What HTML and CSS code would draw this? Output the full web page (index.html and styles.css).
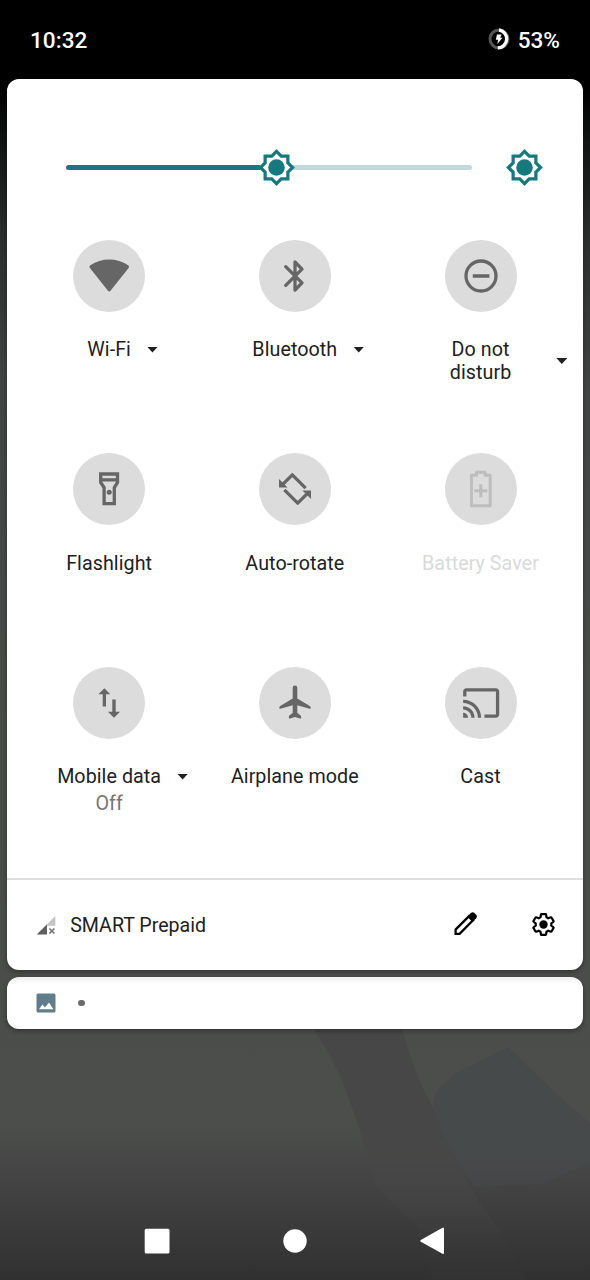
FILE: index.html
```
<!DOCTYPE html>
<html lang="en">
<head>
<meta charset="utf-8">
<title>Quick settings</title>
<link rel="stylesheet" href="styles.css">
</head>
<body>
<div class="screen">
  <svg class="wallpaper" viewBox="0 0 590 280">
    <path fill="#484747" d="M306 18Q338 64 347 94Q364 138 376 187L418 227Q422 255 433 280H527Q507 238 480 204Q460 168 448 145L433 108Q410 66 400 18Z"/>
    <path fill="#464a4b" d="M508 47L457 73Q431 90 433 110L448 145L474 187L542 184L590 163V123L561 98L542 80Z"/>
  </svg>

  <header class="status">
    <span class="clock">10:32</span>
    <span class="battery">
      <svg class="battery-ring" viewBox="0 0 22 24">
        <circle cx="11" cy="12" r="9" fill="none" stroke="#555" stroke-width="3"/>
        <path d="M11 3A9 9 0 0 1 9.8 20.9" fill="none" stroke="#fff" stroke-width="3.4"/>
        <path d="M9 7.5h4.6l-1.4 3.2h2.3L9.3 17l.8-4.2H7.8Z" fill="#fff"/>
      </svg>
      <span>53%</span>
    </span>
  </header>

  <main class="panel">
    <div class="brightness">
      <div class="slider">
        <span class="slider-on"></span>
        <svg class="sun" viewBox="0 0 24 24"><path class="sun-rays" d="M19 9.1V5h-4.1L12 2.1 9.1 5H5v4.1L2.1 12 5 14.9V19h4.1l2.9 2.9 2.9-2.9H19v-4.1l2.9-2.9Z"/><circle cx="12" cy="12" r="5.1"/></svg>
        <span class="slider-off"></span>
      </div>
      <svg class="sun" viewBox="0 0 24 24"><path class="sun-rays" d="M19 9.1V5h-4.1L12 2.1 9.1 5H5v4.1L2.1 12 5 14.9V19h4.1l2.9 2.9 2.9-2.9H19v-4.1l2.9-2.9Z"/><circle cx="12" cy="12" r="5.1"/></svg>
    </div>

    <div class="tiles">
      <div class="tile">
        <svg class="disc" viewBox="0 0 72 72"><path class="fill" d="M16.9 27.9Q15.6 26.4 17.3 25.2Q26 19.4 36.3 19.4T55.2 25.2Q56.8 26.4 55.6 27.9L37.5 50.8Q36.2 52 35 50.8Z"/></svg>
        <div class="label-row"><span class="label">Wi-Fi</span><i class="caret"></i></div>
      </div>
      <div class="tile">
        <svg class="disc" viewBox="0 0 72 72"><path class="line round" d="M26.7 26.7L43 42.8 36 50V22l7 7.2L26.7 45.3"/></svg>
        <div class="label-row"><span class="label">Bluetooth</span><i class="caret"></i></div>
      </div>
      <div class="tile">
        <svg class="disc" viewBox="0 0 72 72"><circle class="line" cx="36" cy="36" r="15"/><path class="line" d="M27.8 36h16.6"/></svg>
        <div class="label-row wide"><span class="label">Do not<br>disturb</span><i class="caret"></i></div>
      </div>
      <div class="tile">
        <svg class="disc" viewBox="0 0 72 72"><path class="line" d="M27.7 21H44.5V29.5L41.3 34.6V50.6H31.1V34.6L27.7 29.5ZM28 26.9H44"/><circle class="fill" cx="36.2" cy="39.2" r="2.5"/></svg>
        <div class="label-row"><span class="label">Flashlight</span></div>
      </div>
      <div class="tile">
        <svg class="disc" viewBox="0 0 72 72"><g id="turn"><path class="line" stroke-linejoin="round" d="M24 31.2L33.3 21.8 46.6 35.1"/><path class="fill" d="M20 26V34.4H28.6Z"/></g><use href="#turn" transform="rotate(180 36 36)"/></svg>
        <div class="label-row"><span class="label">Auto-rotate</span></div>
      </div>
      <div class="tile disabled">
        <svg class="disc" viewBox="0 0 72 72"><path class="line" stroke-linejoin="round" d="M31.5 22.2V19.2H40.2V22.2H45.2V52.7H26.4V22.2ZM35.8 31.2V44.2M29.3 37.7H42.3"/></svg>
        <div class="label-row"><span class="label">Battery Saver</span></div>
      </div>
      <div class="tile">
        <svg class="disc" viewBox="0 0 72 72"><path class="fill" d="M31.4 21.2L37.3 27.2H33V39.5H29.7V27.2H25.4ZM41 50.8L35 44.8H39.3V32.5H42.7V44.8H47Z"/></svg>
        <div class="label-row"><span class="label">Mobile data</span><i class="caret"></i></div>
        <span class="state">Off</span>
      </div>
      <div class="tile">
        <svg class="disc" viewBox="0 0 72 72"><path class="fill" d="M36 18.5A2.3 2.3 0 0 1 38.3 20.8V31.5L50.4 38.7Q51.8 39.6 51.8 41Q51.7 42 50.6 41.7L38.3 38.3V46L41.4 48.2Q42.2 49 42.2 50.7Q42.1 51.8 41 51.5L36 50.1 31 51.5Q29.9 51.8 29.8 50.7Q29.8 49 30.6 48.2L33.7 46V38.3L21.4 41.7Q20.3 42 20.2 41Q20.2 39.6 21.6 38.7L33.7 31.5V20.8A2.3 2.3 0 0 1 36 18.5Z"/></svg>
        <div class="label-row"><span class="label">Airplane mode</span></div>
      </div>
      <div class="tile">
        <svg class="disc" viewBox="0 0 72 72"><path class="fill" transform="translate(16.5 16.3) scale(1.64)" d="M21 3H3c-1.1 0-2 .9-2 2v3h2V5h18v14h-7v2h7c1.1 0 2-.9 2-2V5c0-1.1-.9-2-2-2zM1 18v3h3c0-1.66-1.34-3-3-3zm0-4v2c2.76 0 5 2.24 5 5h2c0-3.87-3.13-7-7-7zm0-4v2c4.97 0 9 4.03 9 9h2c0-6.08-4.93-11-11-11z"/></svg>
        <div class="label-row"><span class="label">Cast</span></div>
      </div>
    </div>

    <footer class="footer">
      <svg class="signal" viewBox="0 0 20 20"><path fill="#c4c4c4" d="M11 9.3L19.3 1V10.8H11Z"/><path fill="#5f5f5f" d="M11 9.3V19.6H.7Z"/><path d="M13.4 13.5l5 5M18.4 13.5l-5 5" stroke="#777" stroke-width="1.7"/></svg>
      <span class="carrier">SMART Prepaid</span>
      <svg class="edit" viewBox="0 0 24 24"><path d="M1.6 21.9V17.6L15 4.2 19 8.2 5.6 21.9Z" fill="none" stroke="#000" stroke-width="2.3"/><path d="M13.2 4.7L16.8 1.1Q18.7-.5 20.5 1.1L22.2 2.8Q23.7 4.6 22.2 6.3L18.5 10Z"/></svg>
      <svg class="gear" viewBox="0 0 24 24"><path fill="none" stroke="#000" stroke-width="2.1" d="M19.43 12.98c.04-.32.07-.64.07-.98 0-.34-.03-.66-.07-.98l2.11-1.65c.19-.15.24-.42.12-.64l-2-3.46c-.09-.16-.26-.25-.44-.25-.06 0-.12.01-.17.03l-2.49 1c-.52-.4-1.08-.73-1.69-.98l-.38-2.65C14.46 2.18 14.25 2 14 2h-4c-.25 0-.46.18-.49.42l-.38 2.65c-.61.25-1.17.59-1.69.98l-2.49-1c-.06-.02-.12-.03-.18-.03-.17 0-.34.09-.43.25l-2 3.46c-.13.22-.07.49.12.64l2.11 1.65c-.04.32-.07.65-.07.98 0 .33.03.66.07.98l-2.11 1.65c-.19.15-.24.42-.12.64l2 3.46c.09.16.26.25.44.25.06 0 .12-.01.17-.03l2.49-1c.52.4 1.08.73 1.69.98l.38 2.65c.03.24.24.42.49.42h4c.25 0 .46-.18.49-.42l.38-2.65c.61-.25 1.17-.59 1.69-.98l2.49 1c.06.02.12.03.18.03.17 0 .34-.09.43-.25l2-3.46c.12-.22.07-.49-.12-.64l-2.11-1.65z"/><circle cx="12" cy="12" r="4"/></svg>
    </footer>
  </main>

  <section class="notice">
    <svg class="picture" viewBox="0 0 20 20"><rect x=".5" y=".5" width="19" height="19" rx="1.5" fill="#607d8b"/><path fill="#fff" d="M3 16.2L6.5 11.5 9 14.4 13 9.5 17.4 16.2Z"/></svg>
    <span class="dot"></span>
  </section>

  <nav class="nav">
    <svg viewBox="0 0 28 28"><rect x="1.7" y="1.7" width="24.8" height="24.8" rx="1.5"/></svg>
    <svg viewBox="0 0 28 28"><circle cx="14" cy="14" r="11.7"/></svg>
    <svg viewBox="0 0 28 28"><path stroke="#fff" stroke-width="2" stroke-linejoin="round" d="M25 1.6V26L3.3 13.8Z"/></svg>
  </nav>
</div>
</body>
</html>
```
FILE: styles.css
```
* { box-sizing: border-box; }
body { margin: 0; font-family: Roboto, "Liberation Sans", sans-serif; }
svg { display: block; flex: none; }

.screen {
  position: relative;
  display: flex;
  flex-direction: column;
  width: 590px;
  height: 1280px;
  overflow: hidden;
  background: linear-gradient(#000 0, #000 85px, #141515 145px, #2c2f2e 240px, #424544 390px, #4a4c4a 700px, #4c4e4c 1125px, #3d3d3d 1215px, #303030 1280px);
}
.wallpaper {
  position: absolute;
  left: 0;
  bottom: 0;
  width: 590px;
  height: 280px;
  -webkit-mask-image: linear-gradient(#000 45%, rgba(0, 0, 0, .1) 85%);
  mask-image: linear-gradient(#000 45%, rgba(0, 0, 0, .1) 85%);
}

.status {
  display: flex;
  align-items: center;
  justify-content: space-between;
  height: 79px;
  padding: 1px 30px 0;
  color: #fff;
  font-size: 22.6px;
  font-weight: 500;
}
.battery { display: flex; align-items: center; gap: 8px; }
.battery-ring { width: 22px; height: 24px; margin-top: -2px; }

.panel {
  position: relative;
  height: 891px;
  margin: 0 6.7px;
  border-radius: 12px;
  background: #fff;
  box-shadow: 0 2px 5px rgba(0, 0, 0, .35);
}
.brightness {
  display: flex;
  align-items: center;
  justify-content: space-between;
  height: 160.5px;
  padding: 16px 39.3px 0 59.3px;
}
.slider { display: flex; align-items: center; width: 406px; }
.slider-on, .slider-off { height: 5px; }
.slider-on { width: 194px; margin-right: -3px; border-radius: 3px 0 0 3px; background: #17797d; }
.slider-off { flex: 1; margin-left: -3px; border-radius: 0 3px 3px 0; background: #c2d9db; }
.sun { position: relative; z-index: 1; width: 39px; height: 39px; fill: #17797d; }
.sun-rays { fill: #fff; stroke: #17797d; stroke-width: 2; }

.tiles {
  display: grid;
  grid-template-columns: repeat(3, 185.7px);
  grid-auto-rows: 213.5px;
  height: 638.5px;
  padding-left: 9.6px;
}
.tile { display: flex; flex-direction: column; align-items: center; }
.disc { width: 72px; height: 72px; border-radius: 50%; background: #dcdcdc; }
.fill { fill: #666; }
.line { fill: none; stroke: #666; stroke-width: 3.3; }
.round { stroke-linecap: round; stroke-linejoin: round; }
.label-row {
  display: grid;
  grid-template-columns: 1fr auto 1fr;
  align-items: center;
  width: 100%;
  margin-top: 26.5px;
  color: #212121;
  font-size: 19.7px;
  line-height: 23px;
  letter-spacing: .06px;
}
.label { grid-column: 2; text-align: center; white-space: nowrap; }
.caret {
  width: 11px;
  height: 6px;
  margin-left: 16px;
  background: #212121;
  clip-path: polygon(0 0, 100% 0, 50% 100%);
}
.wide .caret { justify-self: end; margin-right: 6px; }
.state { margin-top: 3.5px; color: #757575; font-size: 19.7px; line-height: 23px; }
.disabled .fill { fill: #bdbdbd; }
.disabled .line { stroke: #bdbdbd; stroke-width: 3; }
.disabled .label { color: #dadada; }

.footer {
  display: flex;
  align-items: center;
  height: 92px;
  padding: 0 27px 2px 29px;
  border-top: 2px solid #dfdfdf;
}
.signal { width: 20px; height: 20px; margin-top: 1px; }
.carrier { flex: 1; margin-left: 14.5px; padding-top: 2px; color: #212121; font-size: 19.6px; }
.edit { width: 24px; height: 24px; }
.gear { width: 25px; height: 25px; margin-left: 53.5px; }

.notice {
  position: relative;
  display: flex;
  align-items: center;
  gap: 22.5px;
  height: 52px;
  margin: 7px 6.7px 0;
  padding-left: 29px;
  border-radius: 12px;
  background: linear-gradient(#eee, #fff 7px);
  box-shadow: 0 2px 5px rgba(0, 0, 0, .35);
}
.picture { width: 20px; height: 20px; }
.dot { width: 6.6px; height: 6.6px; border-radius: 50%; background: #6c6c6c; }

.nav {
  position: relative;
  display: grid;
  grid-template-columns: repeat(3, 28px);
  column-gap: 109.6px;
  margin-top: 197.5px;
  padding-left: 143.3px;
}
.nav svg { width: 28px; height: 28px; fill: #fff; }
```
